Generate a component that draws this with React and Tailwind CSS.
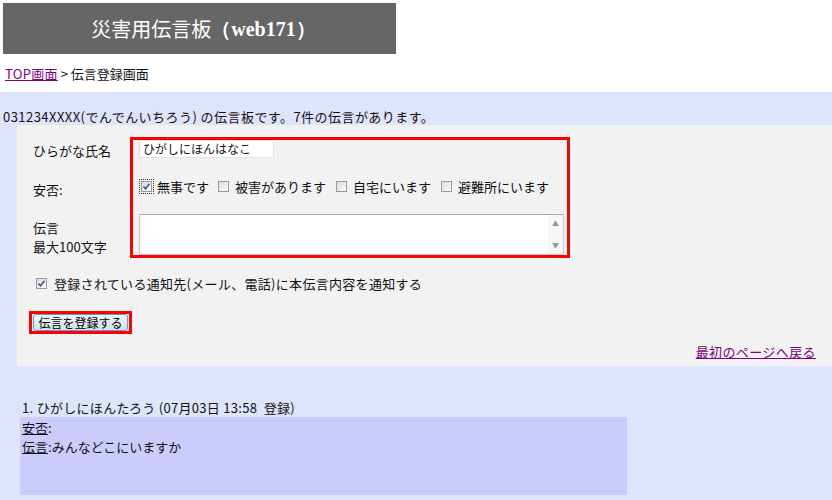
import React from "react";

function Box({ checked, focus }) {
  return (
    <span className={`inline-flex items-center justify-center w-[15px] h-[15px] ${focus ? "border border-dotted border-[#333]" : ""}`}>
      <span className="relative w-[11px] h-[11px] border border-[#9a9a9a] bg-gradient-to-br from-[#dcdcdc] to-[#fafafa] flex items-center justify-center">
        {checked && (
          <svg width="9" height="9" viewBox="0 0 9 9">
            <path d="M1.5 4.5 L3.5 6.8 L7.5 1.8" stroke="#3a4c8c" strokeWidth="1.4" fill="none" />
          </svg>
        )}
      </span>
    </span>
  );
}

export default function App() {
  return (
    <div className="w-[832px] h-[500px] bg-white overflow-hidden text-[13px] text-[#111] font-['Noto_Sans_CJK_JP',sans-serif] leading-none">
      <div className="pt-[3px] pl-[3px]">
        <div className="w-[393px] h-[51px] bg-[#666666] flex items-center justify-center text-white text-[20px] pl-[8px]">
          <span>災害用伝言板</span>
          <span className="font-['Liberation_Serif',serif] font-bold text-[20px]">（web171）</span>
        </div>
      </div>
      <div className="h-[38px] pl-[5px] flex items-center">
        <a className="text-[#800080] underline tracking-[0.3px]">TOP画面</a>
        <span>&nbsp;&gt; 伝言登録画面</span>
      </div>
      <div className="bg-[#dee4fc] h-[408px] pt-[15px]">
        <div className="pl-[3px] h-[18px] flex items-center tracking-[0.45px]">031234XXXX(でんでんいちろう) の伝言板です。7件の伝言があります。</div>
        <div className="ml-[17px] bg-[#f2f2f2] h-[241px] pt-[12px] pl-[16px] flex flex-col">
          <div className="flex">
            <div className="w-[97px] flex flex-col">
              <div className="h-[24px] flex items-center pt-[3px]">ひらがな氏名</div>
              <div className="h-[40px] mt-[8px] flex items-center">安否:</div>
              <div className="mt-[9px] flex flex-col leading-[19px]">
                <span>伝言</span>
                <span>最大100文字</span>
              </div>
            </div>
            <div className="w-[440px] h-[121px] border-[3px] border-[#ff0000] pl-[6px] pt-[0px]">
              <div className="w-[135px] h-[18px] bg-white border border-[#e3e3e3] rounded-[2px] flex items-center pl-[3px] text-[12px]">ひがしにほんはなこ</div>
              <div className="mt-[18px] h-[20px] flex items-center">
                <Box checked focus />
                <span className="ml-[3px] mr-[7px]">無事です</span>
                <Box />
                <span className="ml-[4px] mr-[8px]">被害があります</span>
                <Box />
                <span className="ml-[4px] mr-[8px]">自宅にいます</span>
                <Box />
                <span className="ml-[4px]">避難所にいます</span>
              </div>
              <div className="mt-[18px] w-[425px] h-[41px] bg-white border border-[#c8c8c8] border-t-[#abadb3] flex justify-end">
                <div className="w-[15px] h-full bg-[#f7f7f7] flex flex-col items-center justify-between py-[5px] text-[7px] text-[#9a9a9a]">
                  <span>▲</span>
                  <span>▼</span>
                </div>
              </div>
            </div>
          </div>
          <div className="mt-[16px] h-[18px] flex items-center pl-[1px]">
            <Box checked />
            <span className="ml-[5px] tracking-[0.3px]">登録されている通知先(メール、電話)に本伝言内容を通知する</span>
          </div>
          <div className="mt-[19px] ml-[-4px] w-[103px] h-[23px] border-[3px] border-[#ff0000] flex items-center pl-[1px]">
            <div className="w-[95px] h-[17px] border border-[#5e9fd0] rounded-[3px] bg-gradient-to-b from-[#f2f8fc] to-[#cfe1ee] flex items-center justify-center text-[12px] text-black">伝言を登録する</div>
          </div>
          <div className="mt-[11px] h-[16px] flex justify-end pr-[16px]">
            <a className="text-[#800080] underline tracking-[0.4px]">最初のページへ戻る</a>
          </div>
        </div>
        <div className="mt-[32px] pl-[22px] h-[18px] flex items-center tracking-[0.3px]">1. ひがしにほんたろう (07月03日 13:58&nbsp;&nbsp;登録)</div>
        <div className="ml-[20px] mt-[1px] w-[607px] h-[78px] bg-[#ccccfc] pl-[2px] pt-[1px] leading-[19px]">
          <div><span className="underline">安否</span>:</div>
          <div><span className="underline">伝言</span>:みんなどこにいますか</div>
        </div>
      </div>
    </div>
  );
}
